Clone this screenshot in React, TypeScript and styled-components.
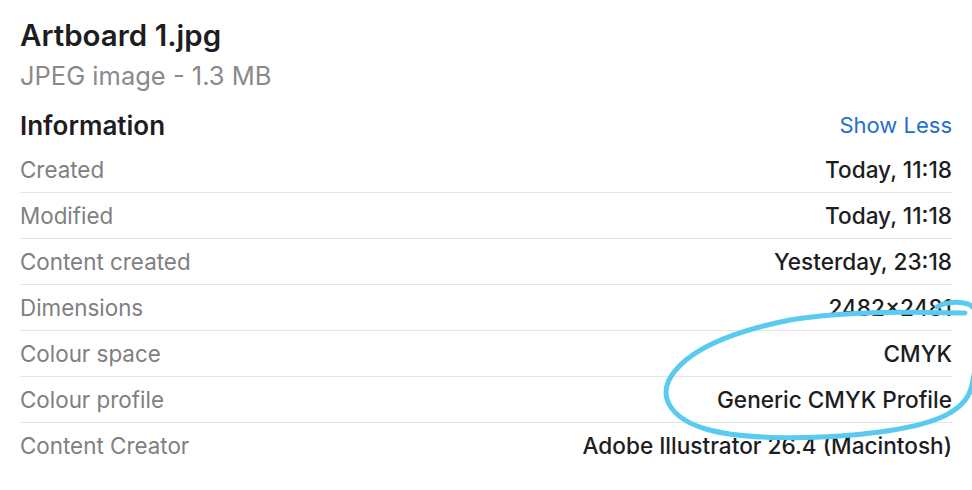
import React from "react";
import styled, { createGlobalStyle } from "styled-components";

const GlobalStyle = createGlobalStyle`
  html, body {
    margin: 0;
    padding: 0;
    background: #ffffff;
  }
  body {
    font-family: Inter, "Noto Sans", "Liberation Sans", sans-serif;
    -webkit-font-smoothing: antialiased;
  }
`;

const rows = [
  { label: "Created", value: "Today, 11:18" },
  { label: "Modified", value: "Today, 11:18" },
  { label: "Content created", value: "Yesterday, 23:18" },
  { label: "Dimensions", value: "2482×2481" },
  { label: "Colour space", value: "CMYK" },
  { label: "Colour profile", value: "Generic CMYK Profile" },
  { label: "Content Creator", value: "Adobe Illustrator 26.4 (Macintosh)" },
];

const App = () => {
  return (
    <>
      <GlobalStyle />
      <Page>
        <Panel>
          <TitleBlock>
            <Title>Artboard 1.jpg</Title>
            <Subtitle>JPEG image - 1.3 MB</Subtitle>
          </TitleBlock>
          <SectionHeader>
            <SectionTitle>Information</SectionTitle>
            <ToggleLink>Show Less</ToggleLink>
          </SectionHeader>
          <InfoList>
            {rows.map((row, idx) => (
              <InfoRow key={row.label} $last={idx === rows.length - 1}>
                <Label>{row.label}</Label>
                <Value>{row.value}</Value>
              </InfoRow>
            ))}
          </InfoList>
        </Panel>
        <Scribble viewBox="0 0 972 490" width="972" height="490">
          <path
            d="M937 307 C945 302 958 301 968 304 C985 310 979 350 972 385 C966 414 930 425 880 432 C820 440 742 440 706 429 C672 419 660 399 669 380 C686 348 740 330 790 320 C850 310 920 312 965 313"
            fill="none"
            stroke="#5ACBF0"
            strokeWidth="5"
            strokeLinecap="round"
            strokeLinejoin="round"
          />
        </Scribble>
      </Page>
    </>
  );
};

const Page = styled.div`
  position: relative;
  width: 972px;
  height: 490px;
  overflow: hidden;
`;

const Panel = styled.div`
  padding: 17px 20px 0 20px;
  width: 932px;
  display: flex;
  flex-direction: column;
`;

const TitleBlock = styled.div`
  display: flex;
  flex-direction: column;
  gap: 8px;
`;

const Title = styled.div`
  font-size: 29.5px;
  font-weight: 600;
  color: #1d1d1f;
  line-height: 36px;
`;

const Subtitle = styled.div`
  font-size: 25.5px;
  font-weight: 400;
  color: #8a8a8a;
  line-height: 30px;
`;

const SectionHeader = styled.div`
  display: flex;
  justify-content: space-between;
  align-items: center;
  height: 40px;
  margin-top: 14px;
`;

const SectionTitle = styled.div`
  font-size: 26px;
  font-weight: 600;
  color: #1d1d1f;
`;

const ToggleLink = styled.div`
  font-size: 22px;
  color: #1f6fd1;
  cursor: pointer;
`;

const InfoList = styled.div`
  display: flex;
  flex-direction: column;
  margin-top: 2px;
`;

const InfoRow = styled.div<{ $last?: boolean }>`
  display: flex;
  justify-content: space-between;
  align-items: center;
  height: 45px;
  border-bottom: ${(p) => (p.$last ? "none" : "1px solid #e4e4e4")};
`;

const Label = styled.div`
  font-size: 22.4px;
  color: #808080;
`;

const Value = styled.div`
  font-size: 22.6px;
  font-weight: 500;
  color: #1d1d1f;
`;

const Scribble = styled.svg`
  position: absolute;
  left: 0;
  top: 0;
  pointer-events: none;
`;

export default App;
